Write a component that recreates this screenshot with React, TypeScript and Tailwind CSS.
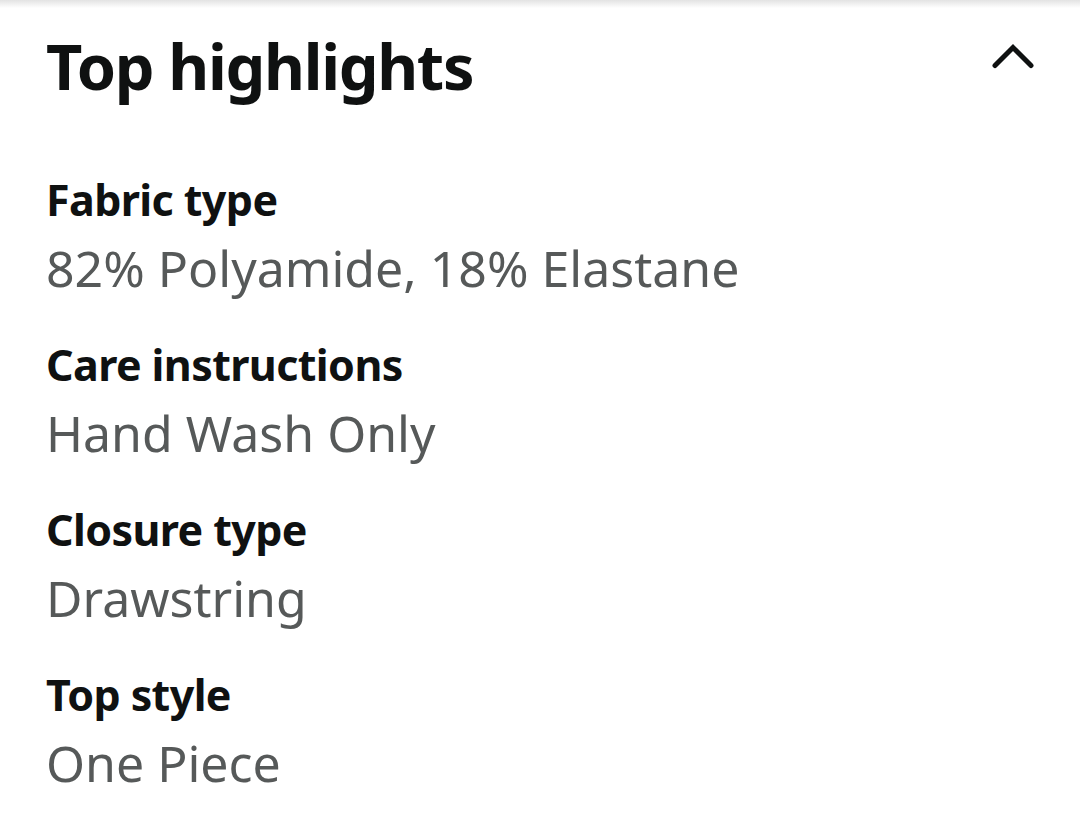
import React from "react";

const items = [
  { label: "Fabric type", value: "82% Polyamide, 18% Elastane" },
  { label: "Care instructions", value: "Hand Wash Only" },
  { label: "Closure type", value: "Drawstring" },
  { label: "Top style", value: "One Piece" },
];

export default function App() {
  return (
    <div
      className="w-[1080px] h-[820px] bg-white overflow-hidden"
      style={{ fontFamily: '"Noto Sans", "Open Sans", sans-serif' }}
    >
      <div className="h-[8px] bg-gradient-to-b from-[#e3e3e3] to-white" />
      <div className="px-[46px]">
        <div className="flex items-start justify-between mt-[18px]">
          <h2 className="text-[63px] leading-[80px] font-bold tracking-[-1.3px] text-[#0f1111]">
            Top highlights
          </h2>
          <svg
            width="42"
            height="26"
            viewBox="0 0 42 26"
            className="mt-[17px]"
            fill="none"
            stroke="#0f1111"
            strokeWidth="5"
            strokeLinecap="round"
            strokeLinejoin="miter"
          >
            <polyline points="3,22.5 21,4.5 39,22.5" />
          </svg>
        </div>
        <div className="mt-[68px] flex flex-col gap-[41px]">
          {items.map((it) => (
            <div key={it.label} className="flex flex-col">
              <div className="text-[43px] leading-[52px] font-bold tracking-[-0.6px] text-[#0f1111]">
                {it.label}
              </div>
              <div className="mt-[12px] text-[50px] leading-[60px] text-[#565959]">
                {it.value}
              </div>
            </div>
          ))}
        </div>
      </div>
    </div>
  );
}
